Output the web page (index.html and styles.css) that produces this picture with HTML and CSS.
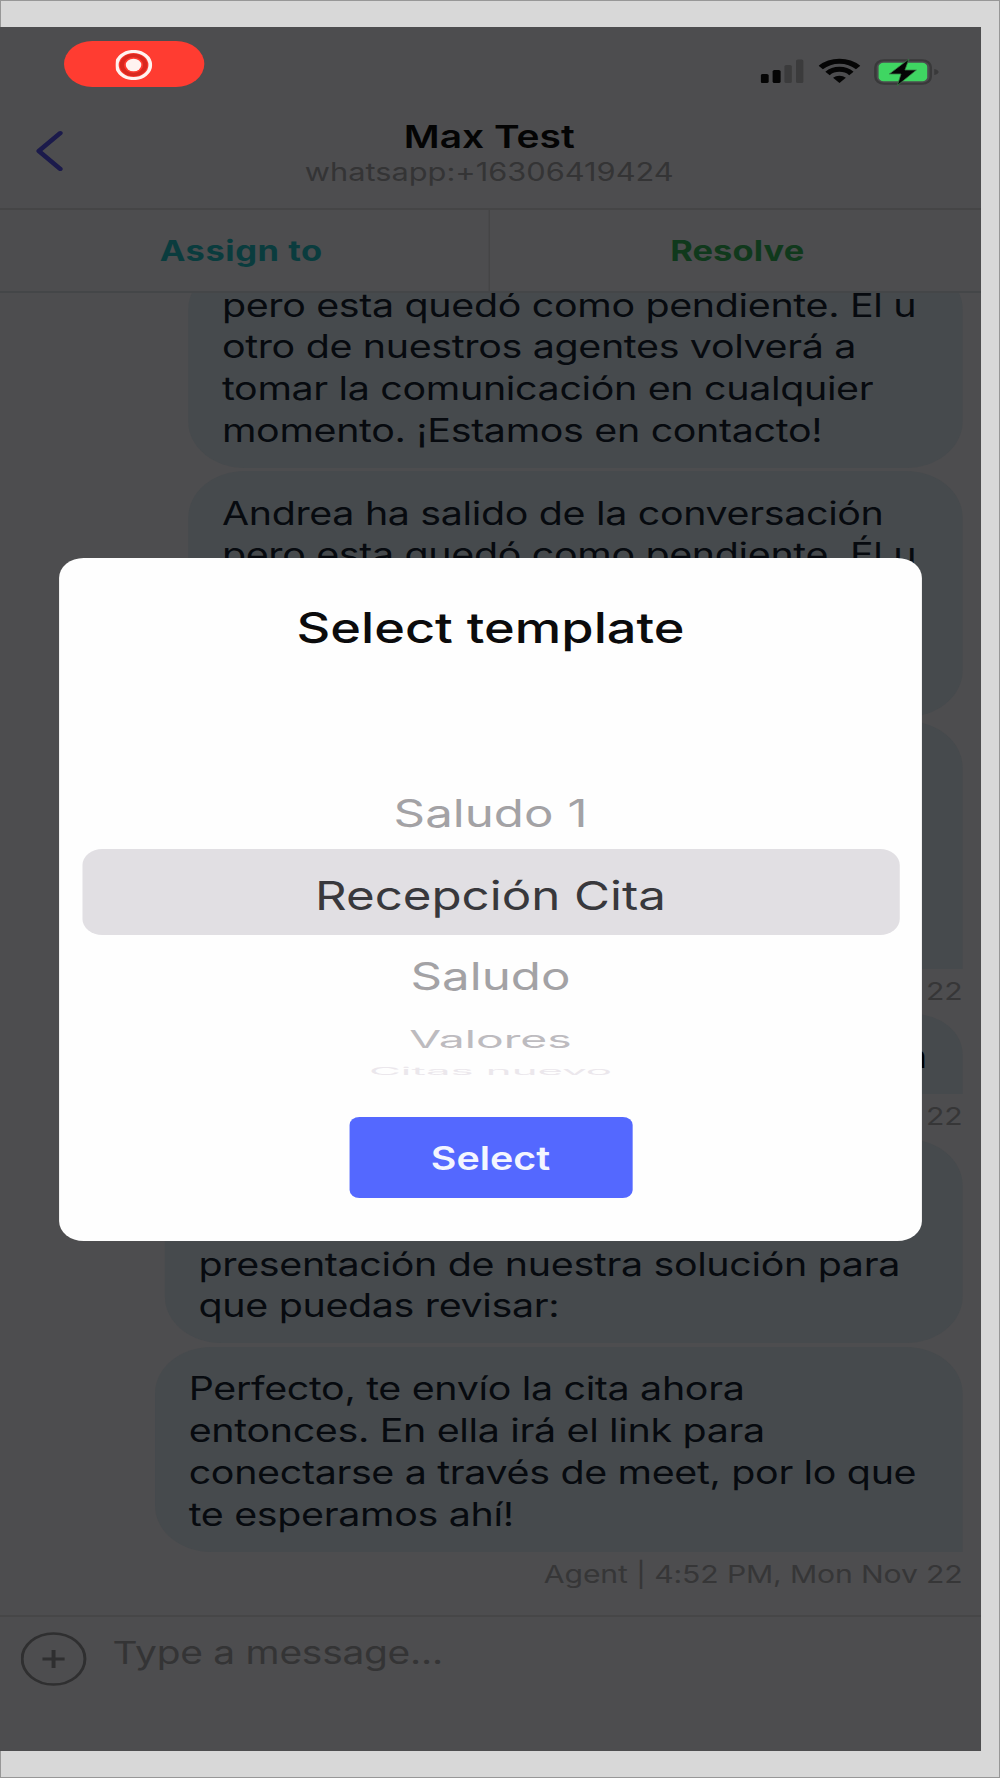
FILE: index.html
```html
<!DOCTYPE html>
<html lang="es">
<head>
<meta charset="utf-8">
<title>Max Test</title>
<link rel="stylesheet" href="styles.css">
</head>
<body>
<div class="frame">
<main class="phone">
  <div class="status">
    <div class="rec">
      <svg width="30" height="30" viewBox="0 0 30 30"><circle cx="14.500" cy="15" r="13.600" fill="none" stroke="#fff3f0" stroke-width="3"/><circle cx="14.500" cy="15" r="9.500" fill="none" stroke="#d9281f" stroke-width="3.500"/><circle cx="14.500" cy="15" r="6.300" fill="#fff3f0"/></svg>
    </div>
    <div class="status-icons">
      <svg width="36" height="26" viewBox="0 0 36 26"><rect x="0" y="16" width="6.500" height="9" rx="1.500" fill="#050505"/><rect x="9.700" y="12" width="6.500" height="13" rx="1.500" fill="#050505"/><rect x="19.300" y="7" width="6" height="18" rx="1.500" fill="#3b3b3c"/><rect x="28.700" y="1.500" width="6" height="23.500" rx="1.500" fill="#3b3b3c"/></svg>
      <svg class="wifi" width="34" height="26" viewBox="0 0 34 26" fill="none" stroke="#050505" stroke-width="5"><path d="M1.800 9.500a21.500 21.500 0 0 1 30.400 0"/><path d="M7.300 15.400a13.700 13.700 0 0 1 19.400 0"/><path d="M17 25l-5.200-5.200a7.400 7.400 0 0 1 10.400 0z" fill="#050505" stroke="none"/></svg>
      <svg width="54" height="28" viewBox="0 0 54 28"><rect x="1.200" y="2.200" width="45" height="23.600" rx="7" fill="none" stroke="#39393a" stroke-width="2"/><rect x="3.800" y="4.800" width="39.500" height="18.400" rx="4" fill="#3fd662"/><path d="M49 11v6q3.500-1 3.500-3t-3.500-3z" fill="#39393a"/><path d="M28.500 1L12.500 16h9.500l-3 11.500L34.500 12h-9.300z" fill="#050505" stroke="#3b7a48" stroke-width=".7"/></svg>
    </div>
  </div>
  <header class="header">
    <svg class="back" width="24" height="42" viewBox="0 0 24 42"><path d="M21 3L3.500 21 21 39" fill="none" stroke="#1b1a4b" stroke-width="4" stroke-linecap="round" stroke-linejoin="round"/></svg>
    <div class="who">
      <h1 class="name">Max Test</h1>
      <p class="number">whatsapp:+16306419424</p>
    </div>
  </header>
  <nav class="actions">
    <button class="action assign">Assign to</button>
    <button class="action resolve">Resolve</button>
  </nav>
  <section class="chat">
    <div class="bubble b-wide">pero esta quedó como pendiente. Él u<br>otro de nuestros agentes volverá a<br>tomar la comunicación en cualquier<br>momento. ¡Estamos en contacto!</div>
    <div class="bubble b-wide">Andrea ha salido de la conversación<br>pero esta quedó como pendiente. Él u<br><br><br><br></div>
    <div class="bubble b-wide tall last"><br><br><br><br><br></div>
    <div class="meta">22</div>
    <div class="bubble b-short last">n</div>
    <div class="meta">22</div>
    <div class="bubble b-xwide"><br><br>presentación de nuestra solución para<br>que puedas revisar:</div>
    <div class="bubble b-full last">Perfecto, te envío la cita ahora<br>entonces. En ella irá el link para<br>conectarse a través de meet, por lo que<br>te esperamos ahí!</div>
    <div class="meta">Agent | 4:52 PM, Mon Nov 22</div>
  </section>
  <footer class="composer">
    <svg width="54" height="54" viewBox="0 0 54 54" fill="none" stroke="#2f2f30"><circle cx="26.500" cy="27" r="25.500" stroke-width="2.400"/><path d="M17.500 27h18M26.500 18v18" stroke-width="3.200"/></svg>
    <span class="placeholder">Type a message...</span>
  </footer>
  <div class="overlay">
    <div class="modal">
      <h2 class="title">Select template</h2>
      <ul class="picker">
        <li class="opt before"><span>Saludo 1</span></li>
        <li class="opt current"><span>Recepción Cita</span></li>
        <li class="opt after"><span>Saludo</span></li>
        <li class="opt far"><span>Valores</span></li>
        <li class="opt edge"><span>Citas nuevo</span></li>
      </ul>
      <button class="select">Select</button>
    </div>
  </div>
</main>
</div>
</body>
</html>
```
FILE: styles.css
```css
* { box-sizing: border-box; margin: 0; padding: 0; }

body {
  width: 1000px;
  height: 1778px;
  font-family: Inter, "Liberation Sans", sans-serif;
}

button { border: 0; background: none; font-family: inherit; }
svg { display: block; flex: none; }

.frame {
  width: 1000px;
  height: 1778px;
  padding-top: 27px;
  overflow: hidden;
  background: #d8d8d8;
  box-shadow: inset 0 0 0 1px #979797;
}

/* The phone is laid out at its natural width and widened to 981px. */
.phone {
  position: relative;
  display: flex;
  flex-direction: column;
  width: 797px;
  height: 1724px;
  overflow: hidden;
  background: #4d4d4f;
  transform: scaleX(1.23087);
  transform-origin: 0 0;
}

.status {
  display: flex;
  justify-content: space-between;
  height: 88px;
  padding: 14px 33px 0 52px;
}

.rec {
  display: flex;
  align-items: center;
  justify-content: center;
  width: 114px;
  height: 46px;
  padding-top: 1px;
  border-radius: 23px;
  background: #ff3c31;
}

.status-icons { display: flex; padding-top: 17px; }
.wifi { margin: 0 11px; }

.header {
  display: flex;
  height: 95px;
  border-bottom: 2px solid #454546;
}

.back { margin: 15px 0 0 28px; }
.who { flex: 1; margin-right: 54px; text-align: center; }
.name { padding-top: 1px; color: #040404; font-size: 31.600px; font-weight: 600; line-height: 41px; }
.number { color: #343435; font-size: 25px; line-height: 31px; }

.actions {
  display: flex;
  height: 83px;
  border-bottom: 2px solid #444648;
}

.action { font-size: 28px; font-weight: 700; }
.assign { width: 398px; padding-right: 5px; border-right: 1px solid #454546; color: #0a3c3e; letter-spacing: .45px; }
.resolve { width: 399px; padding-left: 3px; color: #10391c; letter-spacing: .1px; }

.chat {
  display: flex;
  flex: 1;
  flex-direction: column;
  justify-content: flex-end;
  align-items: flex-end;
  min-height: 0;
  overflow: hidden;
  padding: 0 15px 22px 0;
}

.bubble {
  flex: none;
  margin-top: 3.500px;
  padding: 21.500px 0 16.300px 27.300px;
  border-radius: 46px;
  background: #464a4d;
  color: #070a0f;
  font-size: 32px;
  letter-spacing: -.27px;
  line-height: 41.700px;
  white-space: nowrap;
}

.tall { padding-top: 23.500px; }
.last { border-bottom-right-radius: 0; }
.b-wide { width: 629px; }
.b-short { width: 420px; padding-right: 29px; text-align: right; color: #000; }
.b-xwide { width: 648px; }
.b-full { width: 656px; }

.meta {
  flex: none;
  height: 41.500px;
  color: #363637;
  font-size: 24.500px;
  letter-spacing: -.12px;
  line-height: 45px;
}

.composer {
  display: flex;
  flex: none;
  height: 136px;
  padding: 15px 0 0 17px;
  border-top: 2px solid #464647;
}

.placeholder { margin-left: 20.500px; color: #343435; font-size: 31.600px; letter-spacing: -.2px; line-height: 42px; }

.overlay {
  position: absolute;
  inset: 0;
  display: flex;
  justify-content: center;
  align-items: flex-start;
  padding-top: 531px;
}

.modal {
  display: flex;
  flex-direction: column;
  align-items: center;
  width: 701px;
  height: 683px;
  border-radius: 20px;
  background: #fefefe;
}

.title { padding-top: 44px; color: #0b0b0c; font-size: 42.500px; font-weight: 540; line-height: 52px; }

.picker {
  display: flex;
  flex-direction: column;
  width: 664px;
  height: 340px;
  margin-top: 123px;
  list-style: none;
}

/* Rows turn away from the viewer as on a wheel: same width, less height. */
.opt { font-size: 40px; text-align: center; white-space: nowrap; }
.opt span { display: inline-block; }
.before { height: 72px; line-height: 74px; color: #a3a2a5; }
.current { height: 86px; padding-top: 4px; border-radius: 16px; background: #e1dfe3; line-height: 86px; color: #38383c; }
.after { height: 82px; line-height: 84px; color: #a3a2a5; }
.before span, .after span { transform: scaleY(.95); }
.far { height: 44px; color: #bdbbbf; font-size: 37.600px; line-height: 46px; }
.far span { transform: scaleY(.63); }
.edge { height: 20px; color: #ebe7ec; font-size: 35.500px; line-height: 21px; }
.edge span { transform: scaleY(.3); }

.select {
  width: 230px;
  height: 81px;
  padding-top: 1px;
  border-radius: 8px;
  background: #5468ff;
  color: #f3f5ff;
  font-size: 32px;
  font-weight: 570;
}
```
